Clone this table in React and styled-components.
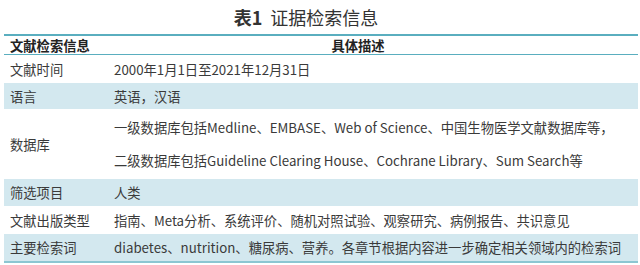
import React from "react"
import styled, { createGlobalStyle } from "styled-components"

const GlobalStyle = createGlobalStyle`
  html, body {
    margin: 0;
    padding: 0;
    background: #ffffff;
  }
  body {
    font-family: "Noto Sans CJK SC", "Noto Sans", sans-serif;
    color: #3a3a3a;
  }
`

const Page = styled.div`
  width: 640px;
  height: 265px;
  padding: 0 2px 0 4px;
  box-sizing: border-box;
  overflow: hidden;
`

const Title = styled.h1`
  margin: 0;
  height: 34px;
  display: flex;
  align-items: center;
  justify-content: center;
  gap: 8px;
  font-size: 18px;
  font-weight: 400;
  color: #333;
  padding-right: 30px;
  box-sizing: border-box;

  b {
    font-weight: 700;
  }
`

const Table = styled.div`
  border-top: 2px solid #5aaebf;
  border-bottom: 2px solid #8cc6d2;
`

const Row = styled.div`
  display: grid;
  grid-template-columns: 104px 1fr;
  align-items: center;
  height: ${p => p.h}px;
  background: ${p => (p.shaded ? "#d3e8ef" : "#ffffff")};
  border-bottom: ${p => (p.head ? "1px solid #5aaebf" : "none")};
  font-size: 13.3px;
  white-space: nowrap;
`

const Label = styled.div`
  padding-left: 6px;
  font-weight: ${p => (p.head ? 700 : 400)};
  color: ${p => (p.head ? "#222" : "#3a3a3a")};
`

const Value = styled.div`
  padding-left: 6px;
  font-weight: ${p => (p.head ? 700 : 400)};
  color: ${p => (p.head ? "#222" : "#3a3a3a")};
  text-align: ${p => (p.head ? "center" : "left")};
  padding-right: ${p => (p.head ? "36px" : "0")};
`

const Line = styled.div`
  height: 33px;
  display: flex;
  align-items: center;
`

const rows = [
  { label: "文献时间", value: "2000年1月1日至2021年12月31日", h: 28 },
  { label: "语言", value: "英语，汉语", h: 26, shaded: true },
  {
    label: "数据库",
    lines: [
      "一级数据库包括Medline、EMBASE、Web of Science、中国生物医学文献数据库等，",
      "二级数据库包括Guideline Clearing House、Cochrane Library、Sum Search等",
    ],
    h: 70,
  },
  { label: "筛选项目", value: "人类", h: 27, shaded: true },
  {
    label: "文献出版类型",
    value: "指南、Meta分析、系统评价、随机对照试验、观察研究、病例报告、共识意见",
    h: 28,
  },
  {
    label: "主要检索词",
    value: "diabetes、nutrition、糖尿病、营养。各章节根据内容进一步确定相关领域内的检索词",
    h: 27,
    shaded: true,
  },
]

export default function App() {
  return (
    <Page>
      <GlobalStyle />
      <Title>
        <b>表1</b>
        <span>证据检索信息</span>
      </Title>
      <Table>
        <Row h={18} head>
          <Label head>文献检索信息</Label>
          <Value head>具体描述</Value>
        </Row>
        {rows.map(r => (
          <Row key={r.label} h={r.h} shaded={r.shaded}>
            <Label>{r.label}</Label>
            <Value>
              {r.lines ? r.lines.map(l => <Line key={l}>{l}</Line>) : r.value}
            </Value>
          </Row>
        ))}
      </Table>
    </Page>
  )
}
